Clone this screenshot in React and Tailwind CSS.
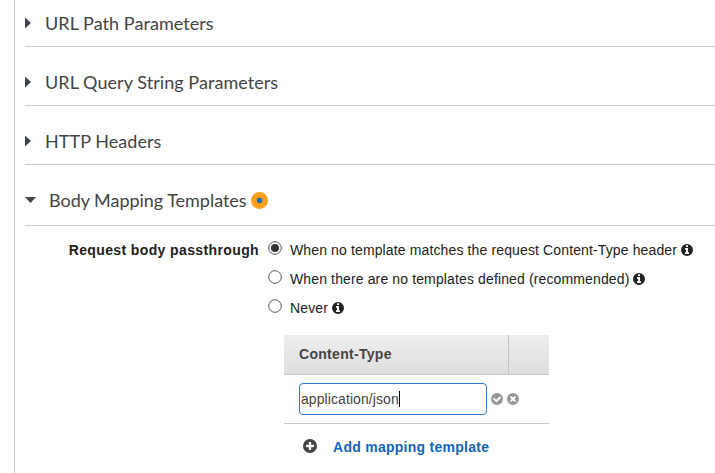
const sections = ['URL Path Parameters', 'URL Query String Parameters', 'HTTP Headers'];

const options = [
  { label: 'When no template matches the request Content-Type header', selected: true },
  { label: 'When there are no templates defined (recommended)', selected: false },
  { label: 'Never', selected: false },
];

const glyphs = {
  info: 'M1152 1376v-160q0-14-9-23t-23-9h-96v-512q0-14-9-23t-23-9h-320q-14 0-23 9t-9 23v160q0 14 9 23t23 9h96v320h-96q-14 0-23 9t-9 23v160q0 14 9 23t23 9h448q14 0 23-9t9-23zm-128-896v-160q0-14-9-23t-23-9h-192q-14 0-23 9t-9 23v160q0 14 9 23t23 9h192q14 0 23-9t9-23z',
  check: 'M1412 734q0-28-18-46l-91-90q-19-19-45-19t-45 19l-408 407-226-226q-19-19-45-19t-45 19l-91 90q-18 18-18 46 0 27 18 45l362 362q19 19 45 19 27 0 46-19l543-543q18-18 18-45z',
  times: 'M1277 1122q0-26-19-45l-181-181 181-181q19-19 19-45 0-27-19-46l-90-90q-19-19-46-19-26 0-45 19l-181 181-181-181q-19-19-45-19-27 0-46 19l-90 90q-19 19-19 46 0 26 19 45l181 181-181 181q-19 19-19 45 0 27 19 46l90 90q19 19 46 19 26 0 45-19l181-181 181 181q19 19 45 19 27 0 46-19l90-90q19-19 19-46z',
  plus: 'M1344 960v-128q0-26-19-45t-45-19h-256v-256q0-26-19-45t-45-19h-128q-26 0-45 19t-19 45v256h-256q-26 0-45 19t-19 45v128q0 26 19 45t45 19h256v256q0 26 19 45t45 19h128q26 0 45-19t19-45v-256h256q26 0 45-19t19-45z',
};

// Solid disc with the named glyph cut out of it.
function CircleIcon({ name, size = 12, className = '' }) {
  return (
    <svg width={size} height={size} viewBox="128 128 1536 1536" fill="currentColor" className={`shrink-0 ${className}`}>
      <path fillRule="evenodd" d={`M896 128a768 768 0 1 0 0 1536a768 768 0 1 0 0 -1536z${glyphs[name]}`} />
    </svg>
  );
}

function CollapsedSection({ title }) {
  return (
    <div className="flex h-[59px] items-center border-b border-[#c8c8c8] pt-[12px]">
      <svg width="6" height="12" viewBox="0 0 6 12" className="shrink-0">
        <path d="M0 0.5L6 6L0 11.5Z" fill="#3f444c" />
      </svg>
      <span className="ml-[14px] whitespace-nowrap tracking-[0.06px]">{title}</span>
    </div>
  );
}

function Radio({ selected }) {
  return (
    <svg width="14" height="14" viewBox="0 0 14 14" className="mt-[6px] shrink-0">
      <circle cx="7" cy="7" r="6.3" fill="#fff" stroke="#555" strokeWidth="1" />
      {selected && <circle cx="7" cy="7" r="4" fill="#333" />}
    </svg>
  );
}

export default function App() {
  return (
    <div className="h-[473px] w-[715px] overflow-hidden bg-white pl-[14px] font-['Liberation_Sans',Arial,sans-serif] text-[14px] text-[#222]">
      <div className="flow-root h-full border-l border-[#c8c8c8] pl-[10px]">
        <div className="-mt-[12px] font-[Lato,sans-serif] text-[18px] text-[#444]">
          {sections.map((title) => (
            <CollapsedSection key={title} title={title} />
          ))}
          <div className="flex h-[61px] items-center border-b border-[#c8c8c8] pt-[10px]">
            <svg width="11" height="6" viewBox="0 0 11 6" className="shrink-0">
              <path d="M0 0H11L5.5 6Z" fill="#444" />
            </svg>
            <span className="ml-[13px] whitespace-nowrap tracking-[-0.03px]">Body Mapping Templates</span>
            <svg width="17" height="17" viewBox="0 0 17 17" className="ml-[4px] shrink-0">
              <circle cx="8.5" cy="8.5" r="8.5" fill="#ffa11c" />
              <circle cx="8.5" cy="8.5" r="5" fill="#f59b19" />
              <circle cx="8.5" cy="8.5" r="2.7" fill="#146eb4" />
            </svg>
          </div>
        </div>

        <div className="flex pt-[9px]">
          <span className="w-[234px] whitespace-nowrap text-right font-bold leading-[31px] tracking-[0.38px]">
            Request body passthrough
          </span>
          <div className="ml-[9px]">
            {options.map(({ label, selected }) => (
              <div key={label} className="flex h-[29px] items-start">
                <Radio selected={selected} />
                <span className="ml-[8px] whitespace-nowrap leading-[31px] tracking-[0.13px]">{label}</span>
                <CircleIcon name="info" className="ml-[3.5px] mt-[9px]" />
              </div>
            ))}
          </div>
        </div>

        <div className="ml-[259px] mt-[13px] w-[265px] text-[#444]">
          <div className="flex h-[40px] border-b border-[#c8c8c8] bg-linear-to-b from-[#eeeeee] to-[#dedede] font-bold">
            <div className="w-[225px] border-r border-[#c4c4c4] pl-[15px] leading-[38px] tracking-[0.3px]">Content-Type</div>
          </div>
          <div className="flex h-[49px] items-center border-b border-[#c8c8c8] pl-[15px] text-[#969696]">
            <div className="flex h-[32px] w-[188px] items-center rounded-[4px] border border-[#2e7cd2] pl-px text-[#444]">
              <span className="tracking-[0.08px]">application/json</span>
              <span className="h-[16px] w-px bg-black" />
            </div>
            <CircleIcon name="check" className="ml-[4px]" />
            <CircleIcon name="times" className="ml-[4px]" />
          </div>
          <div className="flex h-[46px] items-center pl-[19px]">
            <CircleIcon name="plus" size={14} className="-mt-[2px]" />
            <span className="ml-[16px] whitespace-nowrap font-bold tracking-[0.27px] text-[#1166bb]">Add mapping template</span>
          </div>
        </div>
      </div>
    </div>
  );
}
